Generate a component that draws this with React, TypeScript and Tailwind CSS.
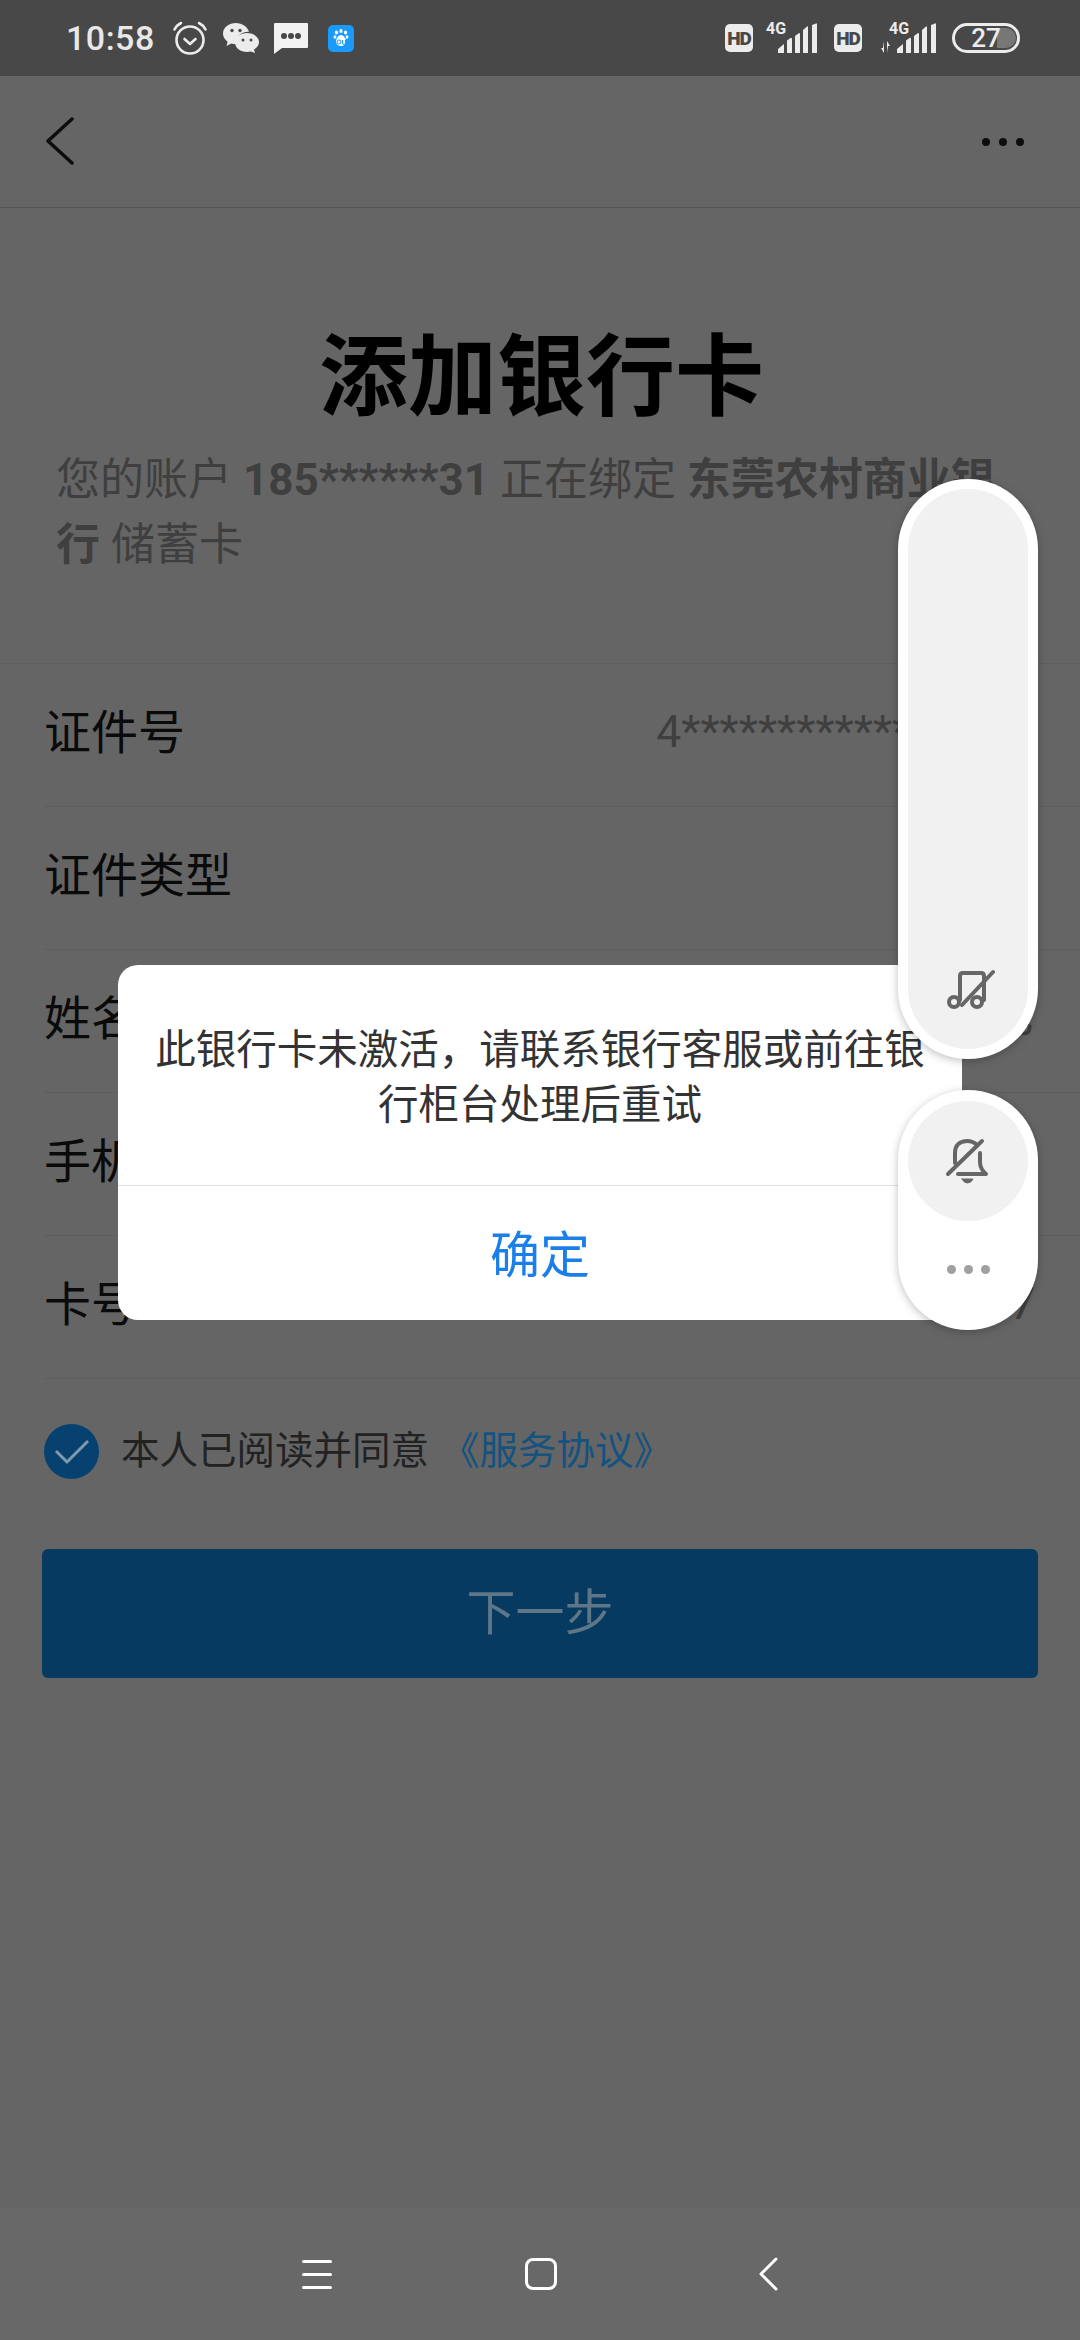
const fontStack = "font-[Roboto,'Noto_Sans_CJK_SC',sans-serif]";

function AlarmIcon() {
  return (
    <svg width="36" height="36" viewBox="0 0 36 36" fill="none" stroke="#ececec" strokeLinecap="round" strokeLinejoin="round">
      <circle cx="18" cy="20" r="13.5" strokeWidth="2.6" />
      <path d="M12.5 19l5.5 5 5.500-5" strokeWidth="2.6" />
      <path d="M2.500 9.500c1.500-3 3.500-5 6.500-6.500M33.500 9.500c-1.500-3-3.500-5-6.500-6.500" strokeWidth="2.6" />
    </svg>
  );
}

function WechatIcon() {
  return (
    <svg width="36" height="30" viewBox="0 0 36 30">
      <path d="M13 0C6 0 0 4.500 0 10.500c0 3.400 1.800 6.200 4.600 8.200L3.500 23l4.800-2.600c1.500.4 3 .6 4.700.6 1 0 1.500 0 1.500 0C12 14 18 8.500 26 8.800 24.500 3.500 19 0 13 0z" fill="#ececec" />
      <path d="M24 10c-6.500 0-12 4-12 9.500S17.500 29 24 29c1.300 0 2.600-.2 3.800-.5l4.200 1.500-1-3.600c3-1.800 5-4.400 5-7.400C36 14 30.500 10 24 10z" fill="#ececec" />
      <circle cx="9" cy="7.500" r="1.700" fill="#484848" />
      <circle cx="17" cy="7.500" r="1.700" fill="#484848" />
      <circle cx="20" cy="17" r="1.500" fill="#484848" />
      <circle cx="28" cy="17" r="1.500" fill="#484848" />
    </svg>
  );
}

function MessageIcon() {
  return (
    <svg width="34" height="31" viewBox="0 0 34 31">
      <path d="M1 0h32a1 1 0 0 1 1 1v23a1 1 0 0 1-1 1H8l-8 6V1a1 1 0 0 1 1-1z" fill="#f2f2f2" />
      <circle cx="10" cy="13" r="3" fill="#484848" />
      <circle cx="17" cy="13" r="3" fill="#484848" />
      <circle cx="24" cy="13" r="3" fill="#484848" />
    </svg>
  );
}

function BaiduIcon() {
  return (
    <svg width="26" height="27" viewBox="0 0 26 27">
      <rect width="26" height="27" rx="5" fill="#1a9bfc" />
      <ellipse cx="8.500" cy="7.500" rx="1.600" ry="2" fill="#fff" />
      <ellipse cx="13" cy="6" rx="1.600" ry="2" fill="#fff" />
      <ellipse cx="17.500" cy="7.500" rx="1.600" ry="2" fill="#fff" />
      <ellipse cx="7" cy="12" rx="1.400" ry="1.800" fill="#fff" />
      <ellipse cx="19" cy="12" rx="1.400" ry="1.800" fill="#fff" />
      <path d="M13 10c-2.500 0-5 3.500-5 6.500C8 19 10 21 13 21s5-2 5-4.500C18 13.500 15.500 10 13 10z" fill="#fff" />
      <circle cx="11" cy="17" r="2" fill="none" stroke="#1a9bfc" strokeWidth="1" />
      <path d="M14.500 15v3a1.500 1.500 0 0 0 3 0v-3" fill="none" stroke="#1a9bfc" strokeWidth="1" />
    </svg>
  );
}

function HdBadge() {
  return (
    <div className="flex h-[28px] w-[28px] items-center justify-center rounded-[5px] bg-[#ececec] font-[Roboto,sans-serif] text-[19px] leading-none font-black tracking-[-1px] text-[#484848]">
      HD
    </div>
  );
}

function SignalIcon({ arrows }: { arrows?: boolean }) {
  return (
    <div className="relative h-[32px] w-[58px]">
      <span className={`absolute top-[-1px] font-[Roboto,sans-serif] text-[16px] leading-none font-bold text-[#ececec] ${arrows ? "left-[9px]" : "left-[5px]"}`}>4G</span>
      <svg width="58" height="32" viewBox="0 0 58 32" fill="#ececec">
        {arrows && <path d="M4 19v12l-3-5h2zM7 31V19l3 5H8z" />}
        <path d="M17 31v-4l6-5v9zM26 31V18.500l3.500-2.500a1 1 0 0 1 1.500 1v14zM34 31V14l4-3a1 1 0 0 1 1 1v19zM42 31V8l4-3.500a.6.6 0 0 1 1 .5v26zM51 31V3l4-1.500a.6.6 0 0 1 1 .5v29z" />
      </svg>
    </div>
  );
}

function Battery() {
  return (
    <div className="relative flex h-[30px] w-[68px] items-center justify-center rounded-full border-[3px] border-[#ececec] font-[Roboto,sans-serif] text-[26px] leading-none font-medium text-[#ececec]">
      <div className="absolute top-[2px] right-[1px] bottom-[2px] w-[19px] rounded-r-full bg-[#777777]" />
      <span className="relative">27</span>
    </div>
  );
}

function StatusBar() {
  return (
    <div className="flex h-[76px] items-center justify-between bg-[#484848] pr-[60px] pl-[66px]">
      <div className="flex items-center">
        <span className="font-[Roboto,sans-serif] text-[34px] leading-none font-medium tracking-[0.5px] text-[#e8e8e8]">10:58</span>
        <div className="ml-[17px] flex items-center gap-[15px]">
          <AlarmIcon />
          <WechatIcon />
          <MessageIcon />
        </div>
        <div className="ml-[20px]">
          <BaiduIcon />
        </div>
      </div>
      <div className="flex items-center">
        <HdBadge />
        <div className="ml-[8px]">
          <SignalIcon />
        </div>
        <div className="ml-[15px]">
          <HdBadge />
        </div>
        <div className="ml-[18px]">
          <SignalIcon arrows />
        </div>
        <div className="ml-[14px]">
          <Battery />
        </div>
      </div>
    </div>
  );
}

function Header() {
  return (
    <div className="flex h-[132px] items-center justify-between border-b border-[#555555] pr-[56px] pl-[46px]">
      <svg className="-mt-[2px]" width="30" height="48" viewBox="0 0 30 48" fill="none" stroke="#0d0d0d" strokeWidth="3.500" strokeLinecap="round" strokeLinejoin="round">
        <path d="M26 2 2 24l24 22" />
      </svg>
      <div className="flex gap-[9px]">
        <div className="h-[8px] w-[8px] rounded-full bg-[#0d0d0d]" />
        <div className="h-[8px] w-[8px] rounded-full bg-[#0d0d0d]" />
        <div className="h-[8px] w-[8px] rounded-full bg-[#0d0d0d]" />
      </div>
    </div>
  );
}

function FormRow({ label, value, inset }: { label: string; value?: string; inset?: boolean }) {
  return (
    <div className={`flex h-[143px] items-center justify-between border-t border-[#5e5e5e] pr-[45px] pb-[5px] ${inset ? "ml-[44px]" : "pl-[44px]"}`}>
      <span className="text-[47px] leading-none text-[#0a0a0a]">{label}</span>
      {value && <span className="text-[44.5px] leading-none text-[#3f3f3f]">{value}</span>}
    </div>
  );
}

function NavBar() {
  return (
    <div className="absolute right-0 bottom-0 left-0 flex h-[132px] items-center bg-[#686868] pl-[302px]">
      <div className="flex w-[30px] flex-col gap-[10px]">
        <div className="h-[3px] rounded-full bg-white" />
        <div className="h-[3px] rounded-full bg-white" />
        <div className="h-[3px] rounded-full bg-white" />
      </div>
      <div className="ml-[193px] h-[32px] w-[32px] rounded-[8px] border-[3px] border-white" />
      <svg className="ml-[201px]" width="20" height="34" viewBox="0 0 20 34" fill="none" stroke="#fff" strokeWidth="3" strokeLinecap="round" strokeLinejoin="round">
        <path d="M18 2 3 17l15 15" />
      </svg>
    </div>
  );
}

function AlertDialog() {
  return (
    <div className="absolute top-[965px] left-[118px] w-[844px] overflow-hidden rounded-[20px] bg-white">
      <div className="flex h-[221px] items-center justify-center border-b border-[#e0e0e0] px-[36px] pt-[6px]">
        <p className="text-center text-[40.5px] leading-[55px] text-[#333333]">此银行卡未激活，请联系银行客服或前往银行柜台处理后重试</p>
      </div>
      <div className="flex h-[134px] items-center justify-center pt-[6px] text-[50px] leading-none text-[#1a7fe8]">确定</div>
    </div>
  );
}

function FloatingPanel() {
  return (
    <>
      <div className="absolute top-[479px] left-[898px] flex h-[580px] w-[140px] rounded-full bg-white p-[10px] shadow-[0_2px_8px_rgba(0,0,0,0.25)]">
        <div className="flex flex-1 items-end justify-center rounded-full bg-[#f1f1f1] pb-[38px] pl-[4px]">
          <svg width="50" height="45" viewBox="0 0 50 45" fill="none" stroke="#666666" strokeWidth="4" strokeLinecap="round" strokeLinejoin="round">
            <circle cx="9" cy="36" r="5" />
            <circle cx="32" cy="36" r="5" />
            <path d="M15 34V10q0-3 3-3h18q3 0 3 3v24" />
            <path d="M48 6 17 39" />
          </svg>
        </div>
      </div>
      <div className="absolute top-[1090px] left-[898px] flex h-[240px] w-[140px] flex-col items-center rounded-full bg-white pt-[11px] shadow-[0_2px_8px_rgba(0,0,0,0.25)]">
        <div className="flex h-[120px] w-[120px] items-center justify-center rounded-full bg-[#f1f1f1]">
          <svg width="46" height="50" viewBox="0 0 46 50" fill="none" stroke="#666666" strokeWidth="4" strokeLinecap="round" strokeLinejoin="round">
            <path d="M10 27V17C10 9 15 5 22 5q6 0 10 4" />
            <path d="M35 17v9q0 7 6 12H13" />
            <path d="M37 5 3 38" />
            <path d="M17 43h11q-2 4-5.500 4T17 43z" fill="#666666" strokeWidth="1" />
          </svg>
        </div>
        <div className="mt-[44px] flex gap-[8px]">
          <div className="h-[9px] w-[9px] rounded-full bg-[#a0a0a0]" />
          <div className="h-[9px] w-[9px] rounded-full bg-[#a0a0a0]" />
          <div className="h-[9px] w-[9px] rounded-full bg-[#a0a0a0]" />
        </div>
      </div>
    </>
  );
}

export default function App() {
  return (
    <div className={`relative h-[2340px] w-[1080px] overflow-hidden bg-[#656565] ${fontStack}`}>
      <StatusBar />
      <Header />

      {/* Title block */}
      <div className="h-[455px] pt-[120px]">
        <h1 className="pl-[3px] text-center text-[89px] leading-[100px] font-bold text-black">添加银行卡</h1>
        <div className="mt-[20px] px-[56px] text-[44px] leading-[65px] whitespace-nowrap text-[#3f3f3f]">
          <div>
            您的账户 <b>185******31</b> 正在绑定 <b>东莞农村商业银</b>
          </div>
          <div>
            <b>行</b> 储蓄卡
          </div>
        </div>
      </div>

      <FormRow label="证件号" value="4*****************X" />
      <FormRow inset label="证件类型" value="身份证" />
      <FormRow inset label="姓名" value="*七" />
      <FormRow inset label="手机号" value="185******31" />
      <FormRow inset label="卡号" value="***************7" />

      <div className="ml-[44px] border-t border-[#5e5e5e]" />

      {/* Agreement */}
      <div className="mt-[45px] flex items-center pl-[44px]">
        <div className="flex h-[55px] w-[55px] items-center justify-center rounded-full bg-[#074170]">
          <svg width="36" height="26" viewBox="0 0 36 26" fill="none" stroke="#8199ab" strokeWidth="3">
            <path d="M2 12l11 11L34 2" />
          </svg>
        </div>
        <span className="ml-[22px] text-[38.5px] leading-none text-[#222222]">本人已阅读并同意</span>
        <span className="ml-[12px] text-[38.5px] leading-none text-[#14527f]">《服务协议》</span>
      </div>

      <div className="mx-[42px] mt-[70px] flex h-[129px] items-center justify-center rounded-[6px] bg-[#073a61] text-[49px] leading-none text-[#5f7688]">
        下一步
      </div>

      <NavBar />
      <AlertDialog />
      <FloatingPanel />
    </div>
  );
}
